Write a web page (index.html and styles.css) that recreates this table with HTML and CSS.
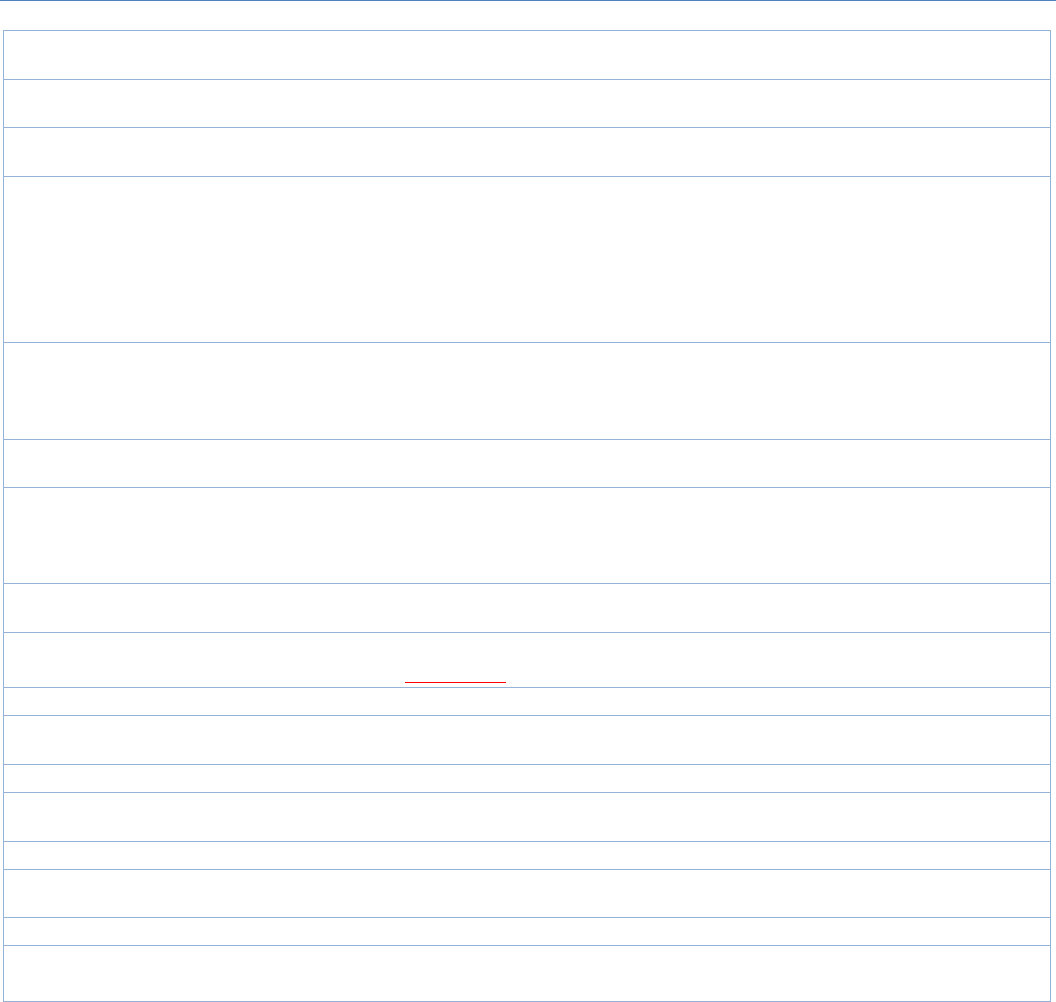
FILE: index.html
```html
<!DOCTYPE html>
<html lang="en">
<head>
    <meta charset="UTF-8">
    <title>Table</title>
    <link rel="stylesheet" href="styles.css">
</head>
<body>
    <div class="topline"></div>
    <div class="sheet">
        <div class="row h49"></div>
        <div class="row h48"></div>
        <div class="row h49"></div>
        <div class="row h166"></div>
        <div class="row h97"></div>
        <div class="row h48"></div>
        <div class="row h96"></div>
        <div class="row h49"></div>
        <div class="row h55 mark-row"><span class="mark"></span></div>
        <div class="row h28"></div>
        <div class="row h49"></div>
        <div class="row h28"></div>
        <div class="row h49"></div>
        <div class="row h28"></div>
        <div class="row h48"></div>
        <div class="row h28"></div>
        <div class="row h56"></div>
    </div>
</body>
</html>
```

FILE: styles.css
```css
body {
    margin: 0;
    padding: 0;
    background: #ffffff;
    font-family: 'Liberation Sans', Arial, sans-serif;
}
.topline {
    height: 1px;
    background-color: #4f81bd;
    margin-bottom: 29px;
}
.sheet {
    margin-left: 3px;
    width: 1048px;
    border: 1px solid #95b3d7;
    border-bottom: none;
    box-sizing: border-box;
}
.row {
    border-bottom: 1px solid #95b3d7;
    box-sizing: border-box;
}
.h28 { height: 28px; }
.h48 { height: 48px; }
.h49 { height: 49px; }
.h55 { height: 55px; }
.h56 { height: 56px; }
.h96 { height: 96px; }
.h97 { height: 97px; }
.h166 { height: 166px; }
.mark-row {
    display: flex;
    align-items: flex-end;
    padding-left: 401px;
    padding-bottom: 4px;
}
.mark {
    display: block;
    width: 101px;
    height: 0;
    border-bottom: 1px solid #ff0000;
}
```
